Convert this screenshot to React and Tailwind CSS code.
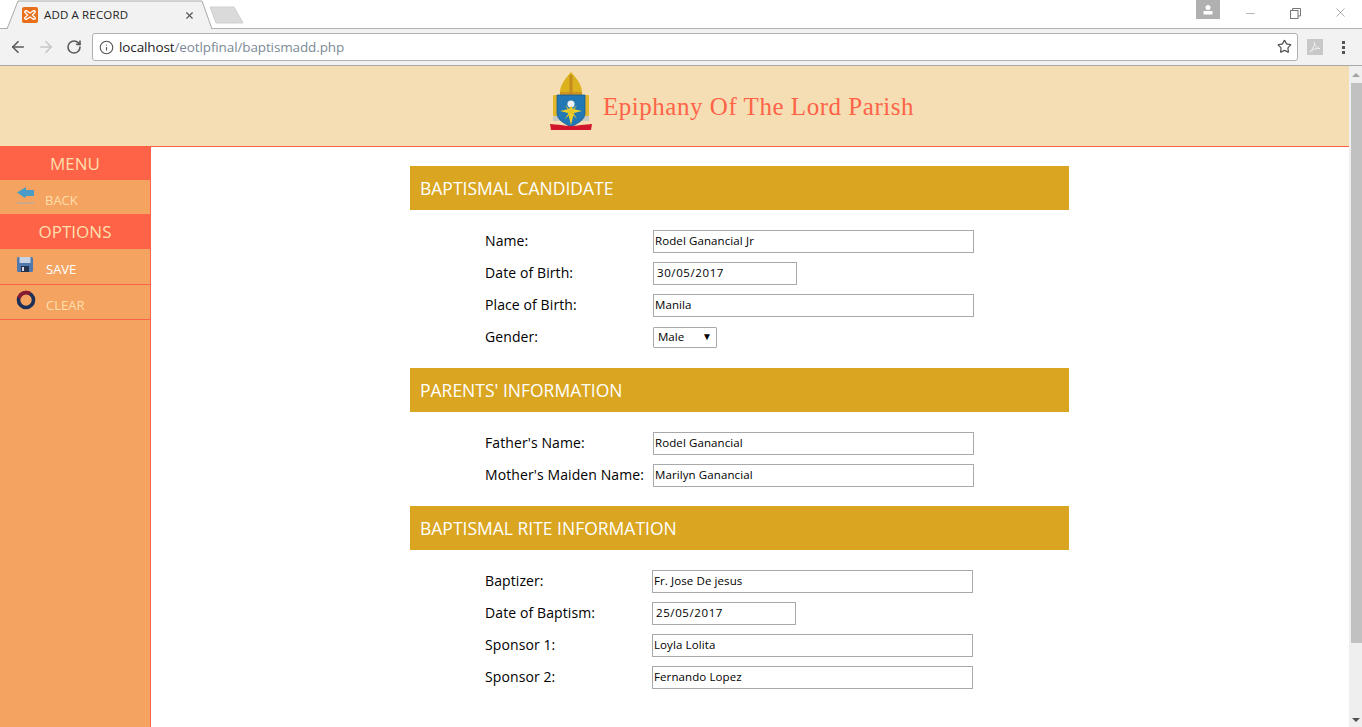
import React from 'react';
import { ArrowLeft, ArrowRight, RotateCw, Info, Star, X, Minus } from 'lucide-react';

const font = "font-['Open_Sans','Noto_Sans',sans-serif]";

function Logo() {
  return (
    <svg width="44" height="62" viewBox="0 0 44 62" className="shrink-0 -mt-[9px]">
      {/* mitre */}
      <path d="M11 24 C10 14 17 7 22 1 C27 7 34 14 33 24 L34 29 L10 29 Z" fill="#dcb11e" />
      <rect x="20.5" y="4" width="3" height="24" fill="#c58a1e" />
      <rect x="11" y="21" width="22" height="3" fill="#c58a1e" opacity="0.7" />
      {/* shoulders */}
      <rect x="4" y="24" width="36" height="21" rx="1" fill="#e2b72a" />
      <rect x="4" y="45" width="36" height="5" fill="#c9c9c4" />
      {/* shield */}
      <path d="M8 24 H36 V42 C36 49 29 52 22 56 C15 52 8 49 8 42 Z" fill="#2178b5" stroke="#1c5a90" strokeWidth="0.8" />
      <circle cx="22" cy="33" r="3.6" fill="#eef1f0" />
      <path d="M22 35 L24 38 L33 40 L25 42 L22 54 L19 42 L11 40 L20 38 Z" fill="#eccf2a" />
      <path d="M16 34 L22 40 L28 34 L24 41 L28 48 L22 42 L16 48 L20 41 Z" fill="#e4c328" />
      {/* ribbon */}
      <path d="M1 53 L12 54 Q22 56 32 54 L43 53 L42 59 L2 59 Z" fill="#d3152b" />
    </svg>
  );
}

function SectionHeader({ children }) {
  return (
    <div className="h-11 bg-[#daa520] pl-[10px] flex items-center text-white text-[17.5px]">{children}</div>
  );
}

function Row({ label, value, width = 'w-[321px]', left = 'w-[168px]', mono }) {
  return (
    <div className="h-8 flex items-center pl-[75px]">
      <div className={`${left} shrink-0 text-[14px] text-black tracking-[0.1px] -mt-[1px] whitespace-nowrap`}>{label}</div>
      <div className={`h-[23px] ${width} bg-white border border-[#a9a9a9] flex items-center text-black ${mono ? 'text-[11.5px] pl-[3px] tracking-[0.6px]' : 'text-[11.5px] pl-[1px] tracking-[0.1px]'}`}>
        {value}
      </div>
    </div>
  );
}

function SideItem({ icon, label, color, height }) {
  return (
    <div className={`${height} flex border-b border-[#ff6347]`}>
      <div className="w-[46px] pl-[16px]">{icon}</div>
      <div className={`pt-[12px] text-[13px] leading-[16px] ${color}`}>{label}</div>
    </div>
  );
}

export default function App() {
  return (
    <div className={`w-[1362px] h-[727px] overflow-hidden flex flex-col bg-white ${font}`}>
      {/* browser chrome */}
      <div className="h-[29px] relative bg-white border-b border-[#b0b0b0] shrink-0">
        <div className="absolute left-[4px] top-0 h-[29px] w-[208px]">
          <svg width="208" height="29" className="absolute inset-0">
            <path d="M0 29 L3 29 L14 1 L198 1 L208 29" fill="#f2f2f2" stroke="#a8a8a8" />
          </svg>
          <div className="relative flex items-center h-[29px] pl-[18px] text-[#222]">
            <div className="w-[16px] h-[16px] rounded-[2px] bg-[#e8701a] flex items-center justify-center">
              <svg width="12" height="12" viewBox="0 0 12 12" fill="none" stroke="#fff" strokeWidth="1.4">
                <path d="M3 2 C1 1 0 3 1.5 4 L3.5 6 L1.5 8 C0 9 1 11 3 10 L6 8 L9 10 C11 11 12 9 10.5 8 L8.5 6 L10.5 4 C12 3 11 1 9 2 L6 4 Z" />
              </svg>
            </div>
            <span className="ml-[6px] text-[11.5px] tracking-[0.15px]">ADD A RECORD</span>
            <X size={11} strokeWidth={2.5} className="absolute left-[180px] top-[10px] text-[#555]" />
          </div>
        </div>
        <svg width="36" height="19" className="absolute left-[208px] top-[6px]">
          <path d="M2 1 L26 1 L35 17 L8 17 Z" fill="#dadada" stroke="#cfcfcf" />
        </svg>
        <div className="absolute left-[1196px] top-0 w-[24px] h-[19px] bg-[#b0b0b0] flex items-center justify-center">
          <svg width="12" height="12" viewBox="0 0 12 12" fill="#fff">
            <circle cx="6" cy="3.5" r="2.5" />
            <rect x="1.5" y="7" width="9" height="3.5" />
          </svg>
        </div>
        <Minus size={13} strokeWidth={1} className="absolute left-[1244px] top-[7px] text-[#777]" />
        <svg width="11" height="11" viewBox="0 0 11 11" fill="none" stroke="#777" className="absolute left-[1290px] top-[8px]">
          <rect x="0.5" y="2.5" width="7.5" height="8" />
          <path d="M2.5 2.5 V0.5 H10.5 V8 H8" />
        </svg>
        <X size={15} strokeWidth={1} className="absolute left-[1333px] top-[5px] text-[#777]" />
      </div>
      <div className="h-[37px] bg-[#f2f2f2] border-b border-[#a8a8a8] flex items-center shrink-0">
        <ArrowLeft size={18} strokeWidth={2.2} className="ml-[9px] text-[#5a5a5a]" />
        <ArrowRight size={18} strokeWidth={2.2} className="ml-[10px] text-[#c8c8c8]" />
        <RotateCw size={16} strokeWidth={2.4} className="ml-[11px] text-[#5a5a5a]" />
        <div className="ml-[10px] w-[1206px] h-[28px] bg-white border border-[#b0b0b0] rounded-[3px] flex items-center relative">
          <Info size={15} strokeWidth={1.8} className="ml-[6px] text-[#555]" />
          <span className="ml-[5px] text-[13.5px] tracking-[-0.12px]">
            <span className="text-[#222]">localhost</span>
            <span className="text-[#7c8a97]">/eotlpfinal/baptismadd.php</span>
          </span>
          <Star size={15} strokeWidth={2} className="absolute right-[5px] top-[5px] text-[#555]" />
        </div>
        <div className="ml-[9px] w-[16px] h-[16px] bg-[#c8c8c8] flex items-center justify-center">
          <svg width="12" height="12" viewBox="0 0 12 12" fill="none" stroke="#f2f2f2" strokeWidth="1">
            <path d="M1 11 C4 8 6 3 5.5 1 C5 3 7 7 11 7.5 C8 7 4 8 1 11 Z" />
          </svg>
        </div>
        <div className="ml-[19px] flex flex-col gap-[2px]">
          <div className="w-[3px] h-[3px] bg-[#555]" />
          <div className="w-[3px] h-[3px] bg-[#555]" />
          <div className="w-[3px] h-[3px] bg-[#555]" />
        </div>
      </div>

      {/* page */}
      <div className="flex-1 flex min-h-0">
        <div className="flex-1 flex flex-col min-w-0">
          <div className="h-[81px] bg-[#f5deb3] border-b border-[#ff6347] shrink-0 flex items-center pl-[549px]">
            <Logo />
            <span className="ml-[10px] mt-[2px] text-[25px] text-[#ff6347] font-['Liberation_Serif',serif] tracking-[0.53px] whitespace-nowrap">Epiphany Of The Lord Parish</span>
          </div>
          <div className="flex-1 flex min-h-0">
            <div className="w-[151px] bg-[#f4a460] border-r border-[#ff6347] shrink-0">
              <div className="h-[33px] bg-[#ff6347] flex items-center justify-center text-[17px] text-[#ffdead]">MENU</div>
              <div className="h-[34px] flex">
                <div className="w-[45px] pl-[16px] pt-[7px]">
                  <svg width="20" height="18" viewBox="0 0 20 18">
                    <path d="M1 5.5 L10 0 V3 H18 V9 H10 L9 11 Z" fill="#4a9cc8" />
                    <rect x="1" y="15" width="17" height="2" fill="#c9a98a" />
                  </svg>
                </div>
                <div className="pt-[12px] text-[13px] leading-[16px] text-[#ffdead]">BACK</div>
              </div>
              <div className="h-[35px] bg-[#ff6347] flex items-center justify-center text-[17px] text-[#ffdead]">OPTIONS</div>
              <SideItem
                height="h-[36px]"
                color="text-white"
                label="SAVE"
                icon={
                  <svg width="18" height="17" viewBox="0 0 18 17" className="mt-[7px]">
                    <rect x="1" y="1" width="16" height="15" rx="1.5" fill="#4f78ad" />
                    <rect x="3.5" y="1" width="11" height="6" fill="#c7d3e4" />
                    <rect x="5" y="10" width="8" height="6" fill="#25324d" />
                    <rect x="6" y="11" width="2" height="4" fill="#d5dce8" />
                  </svg>
                }
              />
              <SideItem
                height="h-[35px]"
                color="text-[#ffdead]"
                label="CLEAR"
                icon={
                  <svg width="20" height="20" viewBox="0 0 20 20" className="mt-[5px]" fill="none" strokeWidth="3.6">
                    <circle cx="10" cy="10" r="7.5" stroke="#1c2f58" />
                    <path d="M3 8 A7.5 7.5 0 0 1 14 3.6" stroke="#8b1a2e" />
                  </svg>
                }
              />
            </div>
            <div className="w-[259px] shrink-0" />
            <div className="w-[659px] shrink-0 pt-[19px]">
              <SectionHeader>BAPTISMAL CANDIDATE</SectionHeader>
              <div className="pt-[15px] pb-[15px]">
                <Row label="Name:" value="Rodel Ganancial Jr" />
                <Row label="Date of Birth:" value="30/05/2017" width="w-[144px]" mono />
                <Row label="Place of Birth:" value="Manila" />
                <div className="h-8 flex items-center pl-[75px]">
                  <div className="w-[168px] shrink-0 text-[14px] text-black tracking-[0.1px] -mt-[1px]">Gender:</div>
                  <div className="h-[21px] w-[64px] bg-white border border-[#a9a9a9] rounded-[1px] flex items-center justify-between pl-[4px] pr-[4px] text-[11.5px] text-black">
                    <span>Male</span>
                    <span className="text-[10px] leading-none -mt-[2px]">▼</span>
                  </div>
                </div>
              </div>
              <SectionHeader>PARENTS' INFORMATION</SectionHeader>
              <div className="pt-[15px] pb-[15px]">
                <Row label="Father's Name:" value="Rodel Ganancial" />
                <Row label="Mother's Maiden Name:" value="Marilyn Ganancial" />
              </div>
              <SectionHeader>BAPTISMAL RITE INFORMATION</SectionHeader>
              <div className="pt-[15px]">
                <Row left="w-[167px]" label="Baptizer:" value="Fr. Jose De jesus" />
                <Row left="w-[167px]" label="Date of Baptism:" value="25/05/2017" width="w-[144px]" mono />
                <Row left="w-[167px]" label="Sponsor 1:" value="Loyla Lolita" />
                <Row left="w-[167px]" label="Sponsor 2:" value="Fernando Lopez" />
              </div>
            </div>
          </div>
        </div>
        {/* scrollbar */}
        <div className="w-[13px] bg-[#efefef] shrink-0 flex flex-col items-end">
          <div className="w-full h-[17px] flex items-center justify-center">
            <div className="w-0 h-0 border-l-[4px] border-r-[4px] border-b-[4px] border-l-transparent border-r-transparent border-b-[#a3a3a3]" />
          </div>
          <div className="w-[11px] h-[560px] bg-[#c1c1c1]" />
          <div className="w-full flex-1 flex items-end justify-center pb-[5px]">
            <div className="w-0 h-0 border-l-[4px] border-r-[4px] border-t-[4px] border-l-transparent border-r-transparent border-t-[#505050]" />
          </div>
        </div>
      </div>
    </div>
  );
}
